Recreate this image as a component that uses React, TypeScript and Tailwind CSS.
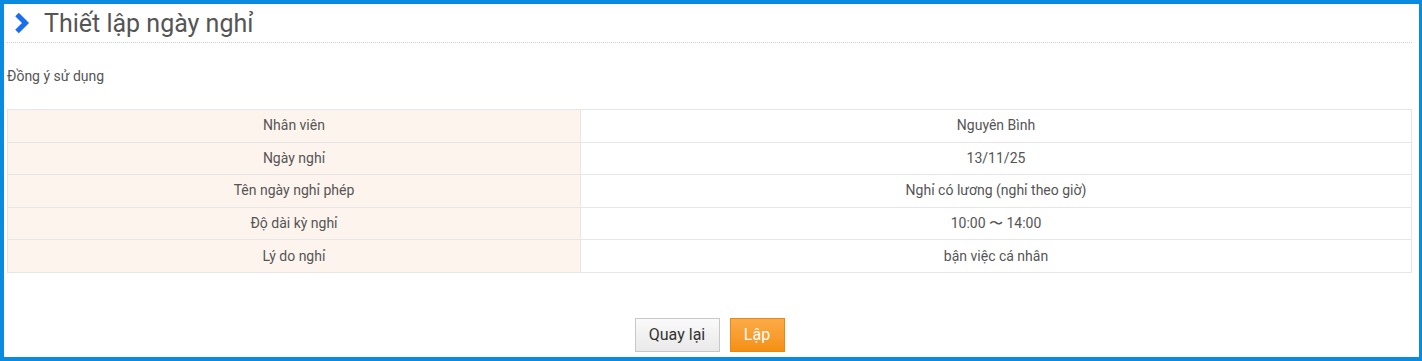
const rows = [
  { label: "Nhân viên", value: "Nguyên Bình" },
  { label: "Ngày nghỉ", value: "13/11/25" },
  { label: "Tên ngày nghỉ phép", value: "Nghỉ có lương (nghỉ theo giờ)" },
  { label: "Độ dài kỳ nghỉ", value: "10:00 〜 14:00" },
  { label: "Lý do nghỉ", value: "bận việc cá nhân" },
];

const App = () => {
  return (
    <div className="h-[361px] w-[1422px] border-t-4 border-l-4 border-r-[3px] border-b-4 border-[#0a8be0] bg-white font-['Roboto','Liberation_Sans',sans-serif] text-[#555]">
      <div className="px-[3px]">
        {/* Title */}
        <div className="flex items-center h-[39px] border-b border-dotted border-[#cfcfcf] mr-[4px]">
          <svg className="ml-[6px] w-[18px] h-[22px]" viewBox="0 0 18 22">
            <path d="M4 2.5 L12.5 11 L4 19.5" fill="none" stroke="#1a6ef0" strokeWidth="5" />
          </svg>
          <h1 className="ml-[13px] text-[25px] leading-none text-[#555]">
            Thiết lập ngày nghỉ
          </h1>
        </div>

        <p className="mt-[25px] text-[14px] leading-[16px]">Đồng ý sử dụng</p>

        {/* Detail table */}
        <table className="mt-[25px] w-[1405px] border-collapse text-[14px]">
          <tbody>
            {rows.map((row) => (
              <tr key={row.label} className="h-[32.6px]">
                <td className="w-[573px] border border-[#e6e6e6] bg-[#fdf4ee] text-center">
                  {row.label}
                </td>
                <td className="border border-[#e6e6e6] text-center">
                  {row.value}
                </td>
              </tr>
            ))}
          </tbody>
        </table>

        {/* Actions */}
        <div className="flex justify-center gap-[10px] mt-[45px] pr-[4px]">
          <button className="h-[34px] w-[85px] border border-[#c8c8c8] bg-gradient-to-b from-[#fafafa] to-[#e9e9e9] text-[16px] text-[#333]">
            Quay lại
          </button>
          <button className="h-[34px] w-[55px] border border-[#e5891a] bg-gradient-to-b from-[#fbab45] to-[#f5900f] text-[16px] text-white">
            Lập
          </button>
        </div>
      </div>
    </div>
  );
};

export default App;
